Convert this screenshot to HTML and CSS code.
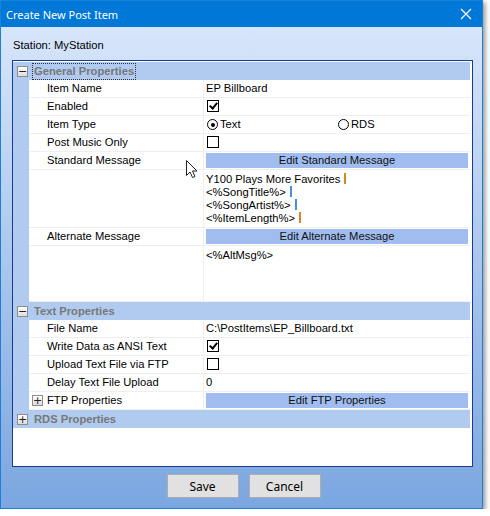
FILE: index.html
```html
<!DOCTYPE html>
<html lang="en">
<head>
    <meta charset="UTF-8">
    <title>Create New Post Item</title>
    <link rel="stylesheet" href="styles.css">
</head>
<body>
    <div class="window">
        <div class="titlebar">
            <span class="title">Create New Post Item</span>
            <svg class="close" width="12" height="12" viewBox="0 0 12 12">
                <path d="M1 1 L11 11 M11 1 L1 11" stroke="#fff" stroke-width="1.2" fill="none"/>
            </svg>
        </div>

        <div class="content">
            <div class="station">Station: MyStation</div>

            <div class="grid">
                <div class="cat">
                    <span class="expander">&minus;</span>
                    <span class="cat-name focused">General Properties</span>
                </div>
                <div class="row"><div class="margin"></div><div class="name">Item Name</div><div class="value">EP Billboard</div></div>
                <div class="row"><div class="margin"></div><div class="name">Enabled</div><div class="value"><span class="check on"></span></div></div>
                <div class="row"><div class="margin"></div><div class="name">Item Type</div>
                    <div class="value radios">
                        <span class="radio-item"><span class="radio on"></span>Text</span>
                        <span class="radio-item"><span class="radio"></span>RDS</span>
                    </div>
                </div>
                <div class="row"><div class="margin"></div><div class="name">Post Music Only</div><div class="value"><span class="check"></span></div></div>
                <div class="row"><div class="margin"></div><div class="name">Standard Message</div><div class="value"><div class="edit-btn">Edit Standard Message</div></div></div>
                <div class="row tall-std"><div class="margin"></div><div class="name"></div>
                    <div class="value memo">
                        <div>Y100 Plays More Favorites<span class="eol orange"></span></div>
                        <div>&lt;%SongTitle%&gt;<span class="eol blue"></span></div>
                        <div>&lt;%SongArtist%&gt;<span class="eol blue"></span></div>
                        <div>&lt;%ItemLength%&gt;<span class="eol orange"></span></div>
                    </div>
                </div>
                <div class="row"><div class="margin"></div><div class="name">Alternate Message</div><div class="value"><div class="edit-btn">Edit Alternate Message</div></div></div>
                <div class="row tall-alt"><div class="margin"></div><div class="name"></div>
                    <div class="value memo"><div>&lt;%AltMsg%&gt;</div></div>
                </div>

                <div class="cat">
                    <span class="expander">&minus;</span>
                    <span class="cat-name">Text Properties</span>
                </div>
                <div class="row"><div class="margin"></div><div class="name">File Name</div><div class="value">C:\PostItems\EP_Billboard.txt</div></div>
                <div class="row"><div class="margin"></div><div class="name">Write Data as ANSI Text</div><div class="value"><span class="check on"></span></div></div>
                <div class="row"><div class="margin"></div><div class="name">Upload Text File via FTP</div><div class="value"><span class="check"></span></div></div>
                <div class="row"><div class="margin"></div><div class="name">Delay Text File Upload</div><div class="value">0</div></div>
                <div class="row"><div class="margin"></div><div class="name sub"><span class="expander small">+</span>FTP Properties</div><div class="value"><div class="edit-btn">Edit FTP Properties</div></div></div>

                <div class="cat">
                    <span class="expander">+</span>
                    <span class="cat-name">RDS Properties</span>
                </div>
            </div>

            <div class="buttons">
                <button class="button">Save</button>
                <button class="button">Cancel</button>
            </div>
        </div>

        <svg class="cursor" width="14" height="20" viewBox="0 0 14 20">
            <path d="M1.5 1.5 L1.5 16.5 L5 13 L7.5 18.5 L10 17.5 L7.5 12 L12 12 Z" fill="#fff" stroke="#222" stroke-width="1"/>
        </svg>
    </div>
</body>
</html>
```

FILE: styles.css
```css
body {
    margin: 0;
    background-color: #ffffff;
    font-family: "Liberation Sans", Arial, sans-serif;
    font-size: 11.2px;
    color: #000;
}
.window {
    position: relative;
    width: 483px;
    height: 509px;
    box-sizing: border-box;
    border: 1px solid #1a80d8;
    background: linear-gradient(#dce9fb, #7ba6e0);
    box-shadow: 2px 2px 5px rgba(0, 0, 0, 0.45);
    display: flex;
    flex-direction: column;
}
.titlebar {
    height: 26px;
    background-color: #0078d7;
    display: flex;
    align-items: center;
    justify-content: space-between;
    padding: 0 10px 0 5px;
}
.title {
    color: #fff;
    font-family: "Noto Sans", sans-serif;
    font-size: 11px;
}
.close {
    display: block;
}
.content {
    flex: 1;
    padding: 11px 9px 0 11px;
}
.station {
    height: 14px;
    line-height: 14px;
    padding-left: 1px;
}
.grid {
    margin-top: 8px;
    height: 407px;
    box-sizing: border-box;
    border: 1px solid #163c93;
    background-color: #fff;
    padding: 1px 2px 0 0;
}
.cat {
    height: 18px;
    background-color: #b0cbef;
    display: flex;
    align-items: center;
}
.cat-name {
    margin-left: 4px;
    padding: 0 1px;
    font-weight: bold;
    color: #777;
    line-height: 15px;
    border: 1px solid transparent;
}
.cat-name.focused {
    border: 1px dotted #333;
}
.expander {
    width: 9px;
    height: 9px;
    margin-left: 4px;
    border: 1px solid #8d8d8d;
    background: linear-gradient(#ffffff, #dcdcdc);
    font-size: 11px;
    line-height: 9px;
    text-align: center;
    color: #222;
    font-family: "DejaVu Sans", sans-serif;
}
.row {
    display: grid;
    grid-template-columns: 16px 175px 1fr;
    height: 18px;
}
.margin {
    background-color: #b0cbef;
}
.name,
.value {
    border-bottom: 1px solid #efefef;
    line-height: 17px;
    white-space: nowrap;
}
.name {
    border-right: 1px solid #efefef;
    padding-left: 18px;
}
.name.sub {
    display: flex;
    align-items: center;
    padding-left: 3px;
}
.expander.small {
    margin: 0 4px 0 0;
    display: inline-block;
}
.value {
    padding-left: 2px;
}
.check {
    display: inline-block;
    width: 10px;
    height: 10px;
    border: 1px solid #000;
    vertical-align: middle;
    margin: -2px 0 0 1px;
    position: relative;
}
.check.on::after {
    content: "";
    position: absolute;
    left: 3px;
    top: 0px;
    width: 3px;
    height: 6px;
    border: solid #000;
    border-width: 0 2px 2px 0;
    transform: rotate(40deg);
}
.radios {
    display: grid;
    grid-template-columns: 131px 1fr;
}
.radio-item {
    display: flex;
    align-items: center;
}
.radio {
    width: 9px;
    height: 9px;
    border: 1px solid #000;
    border-radius: 50%;
    margin: 0 2px 0 1px;
    position: relative;
}
.radio.on::after {
    content: "";
    position: absolute;
    left: 2.5px;
    top: 2.5px;
    width: 4px;
    height: 4px;
    border-radius: 50%;
    background-color: #000;
}
.edit-btn {
    margin: 1px 2px 0 0;
    height: 15px;
    line-height: 15px;
    background-color: #a1bdf0;
    text-align: center;
    color: #111;
}
.tall-std {
    height: 58px;
}
.tall-alt {
    height: 56px;
}
.memo {
    line-height: 13px;
    padding-top: 3px;
}
.eol {
    display: inline-block;
    width: 2px;
    height: 11px;
    margin-left: 4px;
    vertical-align: -1px;
}
.eol.orange {
    background-color: #d8862c;
}
.eol.blue {
    background-color: #4a8fd8;
}
.buttons {
    display: flex;
    justify-content: center;
    gap: 10px;
    margin-top: 7px;
    padding-left: 2px;
}
.button {
    width: 72px;
    height: 24px;
    background-color: #e1e1e1;
    border: 1px solid #adadad;
    font-family: "Noto Sans", sans-serif;
    font-size: 12px;
    color: #000;
    padding: 0;
}
.cursor {
    position: absolute;
    left: 184px;
    top: 158px;
}
```
